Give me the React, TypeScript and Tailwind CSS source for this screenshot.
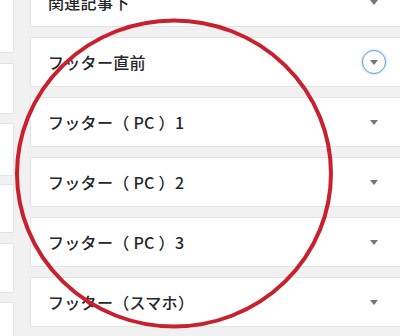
import React from "react";

const leftBoxes = [
  { mt: "mt-[-10px]", h: "h-[63px]" },
  { mt: "mt-[10px]", h: "h-[51px]" },
  { mt: "mt-[9px]", h: "h-[53px]" },
  { mt: "mt-[8px]", h: "h-[49px]" },
  { mt: "mt-[10px]", h: "h-[50px]" },
  { mt: "mt-[9px]", h: "h-[50px]" },
];

const widgets = [
  { title: "関連記事下", focused: false },
  { title: "フッター直前", focused: true },
  { title: "フッター（ PC ）1", focused: false },
  { title: "フッター（ PC ）2", focused: false },
  { title: "フッター（ PC ）3", focused: false },
  { title: "フッター（スマホ）", focused: false },
];

function Arrow() {
  return (
    <span className="block w-0 h-0 border-l-[4px] border-r-[4px] border-t-[5px] border-l-transparent border-r-transparent border-t-[#72777c]" />
  );
}

export default function App() {
  return (
    <div
      className="relative w-[400px] h-[336px] overflow-hidden bg-[#f1f1f1] flex"
      style={{ fontFamily: '"Noto Sans CJK JP", "Noto Sans", sans-serif' }}
    >
      {/* left sidebar column */}
      <div className="flex flex-col w-[14px] shrink-0">
        {leftBoxes.map((b, i) => (
          <div
            key={i}
            className={`${b.mt} ${b.h} shrink-0 bg-white border-y border-r border-[#e2e4e7]`}
          />
        ))}
      </div>

      {/* widget area list */}
      <div className="ml-[16px] mt-[-23px] flex flex-col gap-[10px] w-[380px] shrink-0">
        {widgets.map((w, i) => (
          <div
            key={i}
            className="h-[50px] shrink-0 bg-white border border-[#e2e4e7] flex items-center"
          >
            <span className="flex-1 pl-[17px] text-[16px] font-medium tracking-[0.3px] text-[#23282d] whitespace-nowrap">
              {w.title}
            </span>
            <span
              className={`w-[24px] h-[24px] mr-[23px] flex items-center justify-center rounded-full ${
                w.focused
                  ? "border border-[#5b9dd9] shadow-[0_0_2px_0_rgba(30,140,190,0.6)]"
                  : ""
              }`}
            >
              <Arrow />
            </span>
          </div>
        ))}
      </div>

      {/* red hand-drawn circle */}
      <svg
        className="absolute inset-0 pointer-events-none"
        width="400"
        height="336"
        viewBox="0 0 400 336"
      >
        <ellipse
          cx="174"
          cy="173.5"
          rx="157"
          ry="153"
          fill="none"
          stroke="#c8202c"
          strokeWidth="4"
        />
      </svg>
    </div>
  );
}
